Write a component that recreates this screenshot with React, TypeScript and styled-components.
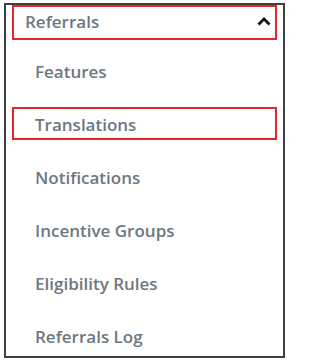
import React from "react";
import styled, { createGlobalStyle } from "styled-components";

const Global = createGlobalStyle`
  html, body {
    margin: 0;
    padding: 0;
    background: #ffffff;
  }
  body {
    font-family: "Open Sans", "Noto Sans", sans-serif;
  }
`;

const Page = styled.div`
  padding: 3px 5px 4px 4px;
  width: 290px;
  height: 362px;
  box-sizing: border-box;
`;

const Panel = styled.nav`
  border: 2px solid #3f3f3f;
  height: 100%;
  box-sizing: border-box;
  padding: 0 6px;
  display: flex;
  flex-direction: column;
`;

const Header = styled.div`
  height: 35px;
  box-sizing: border-box;
  border: 2px solid #e8242b;
  display: flex;
  align-items: center;
  justify-content: space-between;
  padding: 0 4px 2px 11px;
`;

const HeaderTitle = styled.span`
  font-size: 17px;
  font-weight: 600;
  color: #6d777f;
`;

const Chevron = styled.svg`
  width: 14px;
  height: 9px;
  display: block;
`;

const List = styled.ul`
  list-style: none;
  margin: 0;
  padding: 14px 0 0;
  display: flex;
  flex-direction: column;
  gap: 20px;
`;

const Item = styled.li<{ $marked?: boolean }>`
  height: 33px;
  box-sizing: border-box;
  border: 2px solid ${(p) => (p.$marked ? "#e8242b" : "transparent")};
  display: flex;
  align-items: center;
  padding: 2px 0 0 21px;
  font-size: 17px;
  font-weight: 600;
  color: #6d777f;
`;

const items = [
  "Features",
  "Translations",
  "Notifications",
  "Incentive Groups",
  "Eligibility Rules",
  "Referrals Log",
];

export default function App() {
  return (
    <>
      <Global />
      <Page>
        <Panel>
          <Header>
            <HeaderTitle>Referrals</HeaderTitle>
            <Chevron viewBox="0 0 14 9" aria-hidden="true">
              <polyline
                points="1.5,7.5 7,2 12.5,7.5"
                fill="none"
                stroke="#111"
                strokeWidth="2.8"
                strokeLinecap="butt"
                strokeLinejoin="miter"
              />
            </Chevron>
          </Header>
          <List>
            {items.map((label) => (
              <Item key={label} $marked={label === "Translations"}>
                {label}
              </Item>
            ))}
          </List>
        </Panel>
      </Page>
    </>
  );
}
